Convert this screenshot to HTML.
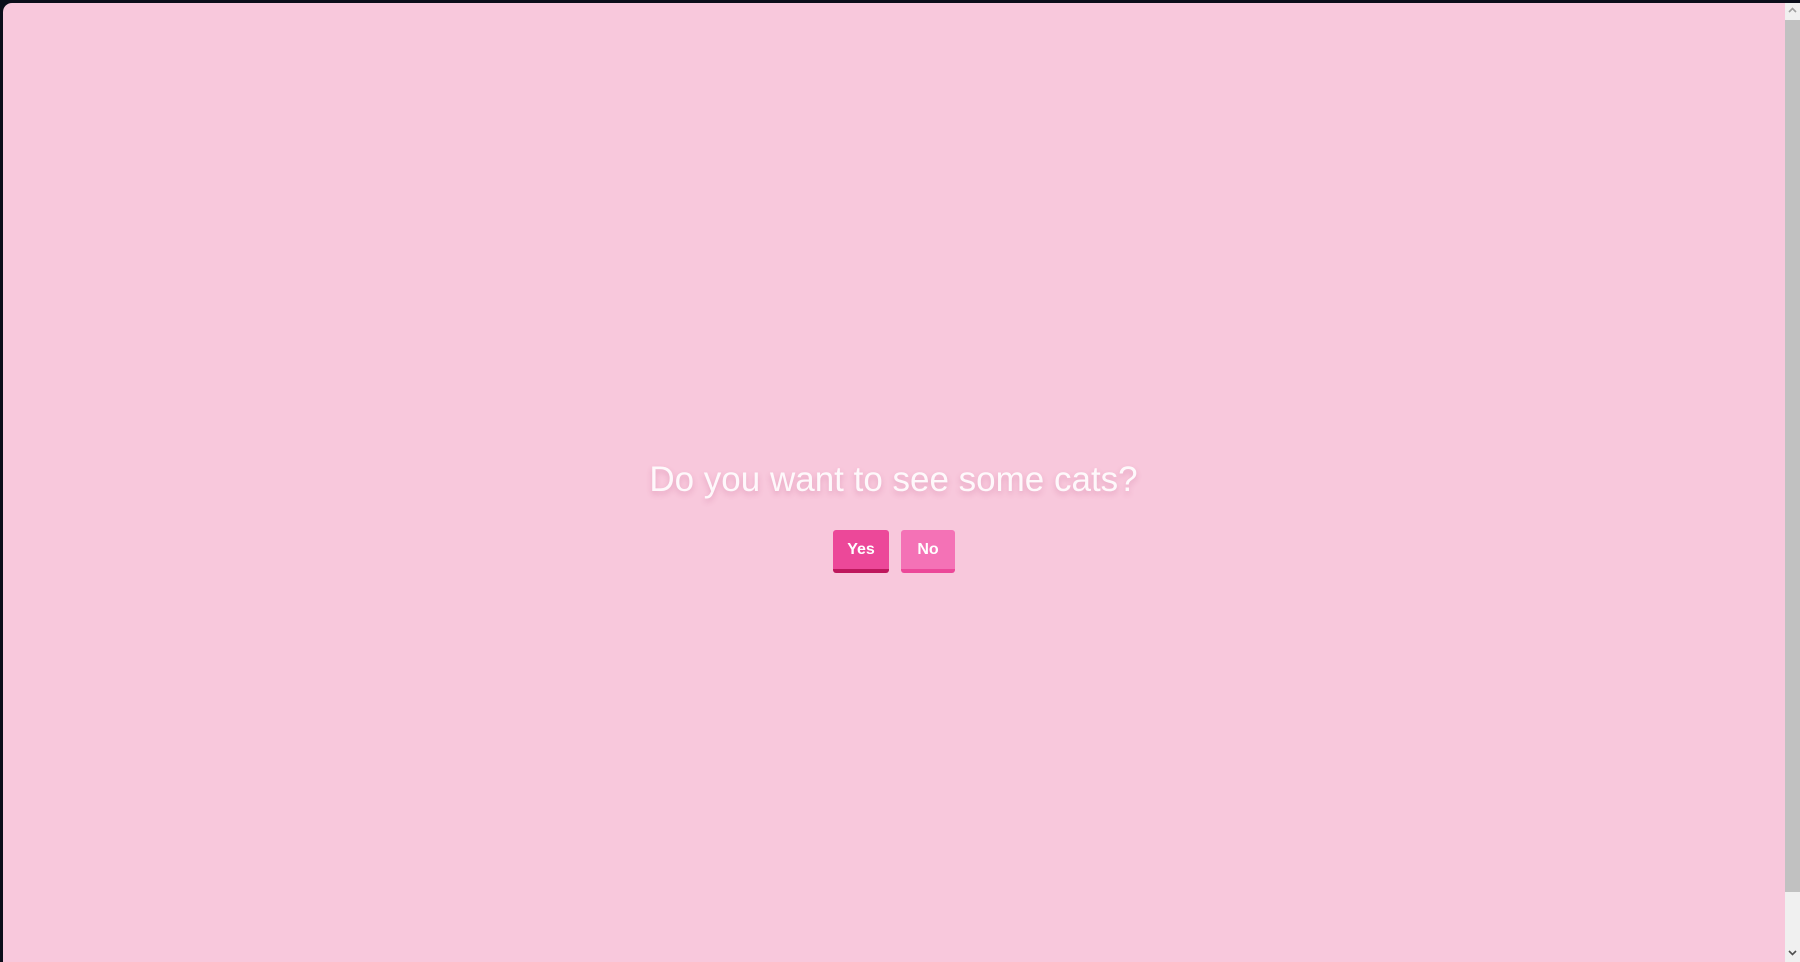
<!DOCTYPE html>
<html><head><style>
html,body{margin:0;padding:0;width:1800px;height:962px;overflow:hidden;background:#0b0d1a;}
.page{position:absolute;left:3px;top:3px;width:1782px;height:959px;background:#f8c8dc;border-top-left-radius:9px;}
.q{position:absolute;left:0;width:1787px;top:458px;text-align:center;font-family:"Liberation Sans",sans-serif;font-size:35px;color:rgba(255,255,255,0.9);text-shadow:0 3px 6px rgba(190,80,130,0.3);line-height:44px;}
.btn{position:absolute;top:530px;height:39px;border-radius:3px;font-family:"Liberation Sans",sans-serif;font-weight:bold;font-size:16px;color:#fff;text-align:center;line-height:39px;}
.yes{left:833px;width:56px;background:#ec4899;border-bottom:4px solid #be185d;}
.no{left:901px;width:54px;background:#f472b6;border-bottom:4px solid #ec4899;}
.sb{position:absolute;left:1785px;top:3px;width:15px;height:959px;background:#f0f0f0;}
.thumb{position:absolute;left:0;top:17px;width:15px;height:872px;background:#c1c1c1;}
</style></head><body>
<div class="page"></div>
<div class="q">Do you want to see some cats?</div>
<div class="btn yes">Yes</div>
<div class="btn no">No</div>
<div class="sb"><div class="thumb"></div>
<svg style="position:absolute;left:3px;top:4px" width="9" height="6"><path d="M1 5 L4.5 1.5 L8 5" stroke="#a0a0a0" stroke-width="1.6" fill="none"/></svg>
<svg style="position:absolute;left:3px;top:947px" width="9" height="6"><path d="M1 1 L4.5 4.5 L8 1" stroke="#505050" stroke-width="1.6" fill="none"/></svg>
</div>
</body></html>
